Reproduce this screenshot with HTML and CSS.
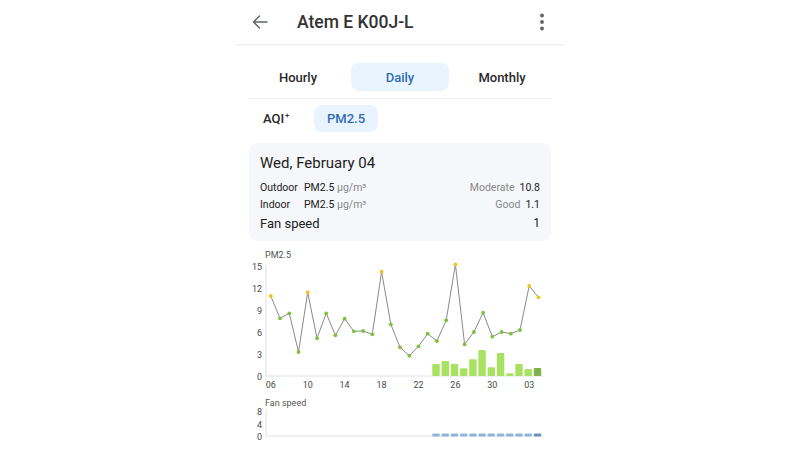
FILE: index.html
```html
<!DOCTYPE html>
<html lang="en">
<head>
<meta charset="utf-8">
<title>Atem E K00J-L</title>
<link rel="stylesheet" href="styles.css">
</head>
<body>
<div class="screen">
  <header class="appbar">
    <svg class="back" width="16" height="14" viewBox="0 0 16 14"><path d="M15 7H1.5M7.5 1L1.5 7l6 6" fill="none" stroke="#5f6368" stroke-width="1.5" stroke-linecap="round" stroke-linejoin="round"/></svg>
    <h1 class="title">Atem E K00J-L</h1>
    <svg class="more" width="6" height="18" viewBox="0 0 6 18"><circle cx="3" cy="2.5" r="1.9" fill="#5f6368"/><circle cx="3" cy="9" r="1.9" fill="#5f6368"/><circle cx="3" cy="15.5" r="1.9" fill="#5f6368"/></svg>
  </header>

  <main class="content">
    <nav class="tabs">
      <span class="tab">Hourly</span>
      <span class="tab active">Daily</span>
      <span class="tab">Monthly</span>
    </nav>

    <div class="filters">
      <span class="filter">AQI<sup>+</sup></span>
      <span class="filter active">PM2.5</span>
    </div>

    <section class="card">
      <div class="card-date">Wed, February 04</div>
      <div class="row">
        <span class="row-name">Outdoor</span>
        <span class="row-metric">PM2.5 <em>µg/m³</em></span>
        <span class="row-level">Moderate</span>
        <span class="row-value">10.8</span>
      </div>
      <div class="row">
        <span class="row-name">Indoor</span>
        <span class="row-metric">PM2.5 <em>µg/m³</em></span>
        <span class="row-level">Good</span>
        <span class="row-value">1.1</span>
      </div>
      <div class="row row-fan">
        <span class="row-name">Fan speed</span>
        <span class="row-value">1</span>
      </div>
    </section>

    <svg class="chart chart-pm" width="330" height="148" viewBox="0 0 330 148">
      <text class="chart-title" x="30" y="14">PM2.5</text>
      <g class="axis-labels" text-anchor="end">
        <text x="27" y="25.5">15</text>
        <text x="27" y="47.5">12</text>
        <text x="27" y="69.5">9</text>
        <text x="27" y="91.5">6</text>
        <text x="27" y="113.5">3</text>
        <text x="27" y="135.5">0</text>
      </g>
      <line x1="31" y1="21" x2="31" y2="132" class="axis"/>
      <line x1="31" y1="132" x2="308" y2="132" class="axis"/>
      <g class="axis-labels" text-anchor="middle">
        <text x="35.8" y="143.5">06</text>
        <text x="72.7" y="143.5">10</text>
        <text x="109.6" y="143.5">14</text>
        <text x="146.6" y="143.5">18</text>
        <text x="183.5" y="143.5">22</text>
        <text x="220.4" y="143.5">26</text>
        <text x="257.3" y="143.5">30</text>
        <text x="294.2" y="143.5">03</text>
      </g>
      <!-- indoor daily averages -->
      <g class="bars">
        <rect x="197.3" y="120" width="7.4" height="12" rx="1"/>
        <rect x="206.6" y="117" width="7.4" height="15" rx="1"/>
        <rect x="215.8" y="120" width="7.4" height="12" rx="1"/>
        <rect x="225" y="124.3" width="7.4" height="7.7" rx="1"/>
        <rect x="234.2" y="115.3" width="7.4" height="16.7" rx="1"/>
        <rect x="243.4" y="106" width="7.4" height="26" rx="1"/>
        <rect x="252.6" y="123.3" width="7.4" height="8.7" rx="1"/>
        <rect x="261.9" y="109" width="7.4" height="23" rx="1"/>
        <rect x="271.1" y="129.3" width="7.4" height="2.7" rx="1"/>
        <rect x="280.3" y="120" width="7.4" height="12" rx="1"/>
        <rect x="289.5" y="125" width="7.4" height="7" rx="1"/>
        <rect x="298.8" y="124" width="7.4" height="8" rx="1" class="today"/>
      </g>
      <!-- outdoor daily averages -->
      <polyline class="line" points="35.8,52 45,74.3 54.3,69.3 63.5,108 72.7,48.3 82,94.3 91.2,69.3 100.4,91.3 109.6,74.7 118.9,87.3 128.1,87 137.3,90.3 146.6,27.7 155.8,80.3 165,103.3 174.3,111.7 183.5,102.3 192.7,89.7 201.9,97 211.2,76.3 220.4,20.3 229.6,100.3 238.9,88 248.1,68.7 257.3,92.7 266.6,88 275.8,89.7 285,86 294.2,42 303.5,53.3"/>
      <g class="dots">
        <circle cx="35.8" cy="52" r="1.9" class="moderate"/>
        <circle cx="45" cy="74.3" r="1.9"/>
        <circle cx="54.3" cy="69.3" r="1.9"/>
        <circle cx="63.5" cy="108" r="1.9"/>
        <circle cx="72.7" cy="48.3" r="1.9" class="moderate"/>
        <circle cx="82" cy="94.3" r="1.9"/>
        <circle cx="91.2" cy="69.3" r="1.9"/>
        <circle cx="100.4" cy="91.3" r="1.9"/>
        <circle cx="109.6" cy="74.7" r="1.9"/>
        <circle cx="118.9" cy="87.3" r="1.9"/>
        <circle cx="128.1" cy="87" r="1.9"/>
        <circle cx="137.3" cy="90.3" r="1.9"/>
        <circle cx="146.6" cy="27.7" r="1.9" class="moderate"/>
        <circle cx="155.8" cy="80.3" r="1.9"/>
        <circle cx="165" cy="103.3" r="1.9"/>
        <circle cx="174.3" cy="111.7" r="1.9"/>
        <circle cx="183.5" cy="102.3" r="1.9"/>
        <circle cx="192.7" cy="89.7" r="1.9"/>
        <circle cx="201.9" cy="97" r="1.9"/>
        <circle cx="211.2" cy="76.3" r="1.9"/>
        <circle cx="220.4" cy="20.3" r="1.9" class="moderate"/>
        <circle cx="229.6" cy="100.3" r="1.9"/>
        <circle cx="238.9" cy="88" r="1.9"/>
        <circle cx="248.1" cy="68.7" r="1.9"/>
        <circle cx="257.3" cy="92.7" r="1.9"/>
        <circle cx="266.6" cy="88" r="1.9"/>
        <circle cx="275.8" cy="89.7" r="1.9"/>
        <circle cx="285" cy="86" r="1.9"/>
        <circle cx="294.2" cy="42" r="1.9" class="moderate"/>
        <circle cx="303.5" cy="53.3" r="1.9" class="moderate"/>
      </g>
    </svg>

    <svg class="chart chart-fan" width="330" height="50" viewBox="0 0 330 50">
      <text class="chart-title" x="30" y="13.5">Fan speed</text>
      <g class="axis-labels" text-anchor="end">
        <text x="27" y="22.5">8</text>
        <text x="27" y="35.5">4</text>
        <text x="27" y="47.5">0</text>
      </g>
      <line x1="31" y1="18" x2="31" y2="44" class="axis"/>
      <line x1="31" y1="44" x2="308" y2="44" class="axis"/>
      <g class="fan-bars">
        <rect x="197.3" y="41.5" width="7.4" height="3" rx="1"/>
        <rect x="206.6" y="41.5" width="7.4" height="3" rx="1"/>
        <rect x="215.8" y="41.5" width="7.4" height="3" rx="1"/>
        <rect x="225" y="41.5" width="7.4" height="3" rx="1"/>
        <rect x="234.2" y="41.5" width="7.4" height="3" rx="1"/>
        <rect x="243.4" y="41.5" width="7.4" height="3" rx="1"/>
        <rect x="252.6" y="41.5" width="7.4" height="3" rx="1"/>
        <rect x="261.9" y="41.5" width="7.4" height="3" rx="1"/>
        <rect x="271.1" y="41.5" width="7.4" height="3" rx="1"/>
        <rect x="280.3" y="41.5" width="7.4" height="3" rx="1"/>
        <rect x="289.5" y="41.5" width="7.4" height="3" rx="1"/>
        <rect x="298.8" y="41.5" width="7.4" height="3" rx="1" class="today"/>
      </g>
    </svg>
  </main>
</div>
</body>
</html>
```

FILE: styles.css
```css
html, body {
  margin: 0;
  padding: 0;
  background: #ffffff;
}

body {
  font-family: Roboto, "Noto Sans", "Liberation Sans", sans-serif;
  color: #222;
  display: flex;
  justify-content: center;
  height: 450px;
  overflow: hidden;
}

.screen {
  width: 330px;
  display: flex;
  flex-direction: column;
}

/* top app bar */
.appbar {
  height: 44px;
  display: flex;
  align-items: center;
  padding: 0 20px 0 17px;
  box-shadow: 0 2px 2px -1px rgba(0, 0, 0, 0.10);
  position: relative;
  z-index: 1;
}

.back {
  flex: none;
}

.title {
  flex: 1;
  margin: 0 0 0 29px;
  font-size: 17.5px;
  font-weight: 500;
  color: #333;
}

.more {
  flex: none;
}

.content {
  padding: 0 14px;
  display: flex;
  flex-direction: column;
}

/* period tabs */
.tabs {
  margin-top: 19px;
  display: grid;
  grid-template-columns: repeat(3, 1fr);
  gap: 4px;
  padding-bottom: 7px;
  border-bottom: 1px solid #eceef1;
}

.tab {
  height: 28px;
  display: flex;
  align-items: center;
  justify-content: center;
  font-size: 13px;
  font-weight: 500;
  color: #2a2a2a;
  border-radius: 8px;
}

.tab.active {
  background: #eaf4fe;
  color: #2f6db3;
}

/* pollutant filters */
.filters {
  margin-top: 6px;
  display: flex;
  align-items: center;
  gap: 11px;
}

.filter {
  height: 27px;
  padding: 0 14px;
  display: flex;
  align-items: center;
  font-size: 13px;
  font-weight: 500;
  color: #2a2a2a;
  border-radius: 8px;
}

.filter sup {
  font-size: 7px;
  align-self: flex-start;
  margin-top: 7px;
  margin-left: 1px;
}

.filter.active {
  padding: 0 13px;
  background: #eaf4fe;
  color: #2f6db3;
}

/* selected-day summary */
.card {
  margin-top: 11px;
  background: #f5f7fa;
  border-radius: 10px;
  padding: 10px 11px 7px 11px;
  display: flex;
  flex-direction: column;
}

.card-date {
  font-size: 15px;
  color: #222;
  line-height: 20px;
  margin-bottom: 6px;
}

.row {
  display: flex;
  align-items: center;
  font-size: 10.5px;
  line-height: 17px;
  color: #222;
}

.row-name {
  width: 44px;
}

.row-metric {
  flex: 1;
}

.row-metric em {
  font-style: normal;
  color: #888;
}

.row-level {
  color: #888;
  margin-right: 5px;
}

.row-value {
  color: #222;
}

.row-fan {
  font-size: 13px;
  line-height: 21px;
}

.row-fan .row-name {
  flex: 1;
}

.row-fan .row-value {
  font-size: 12px;
}

/* charts */
.chart {
  display: block;
  margin-left: -14px;
  font-family: Roboto, "Noto Sans", "Liberation Sans", sans-serif;
}

.chart-pm {
  margin-top: 3px;
}

.chart-fan {
  margin-top: 0;
}

.chart-title {
  font-size: 9px;
  fill: #555;
}

.axis-labels {
  font-size: 9px;
  fill: #4a4a4a;
}

.axis {
  stroke: #dcdfe3;
  stroke-width: 1;
}

.line {
  fill: none;
  stroke: #8a8a8a;
  stroke-width: 1;
}

.dots circle {
  fill: #7dc23b;
}

.dots circle.moderate {
  fill: #f2c31c;
}

.bars rect {
  fill: #a8e260;
}

.bars rect.today {
  fill: #7eb348;
}

.fan-bars rect {
  fill: #8fb5dd;
}

.fan-bars rect.today {
  fill: #6c93bd;
}
```
